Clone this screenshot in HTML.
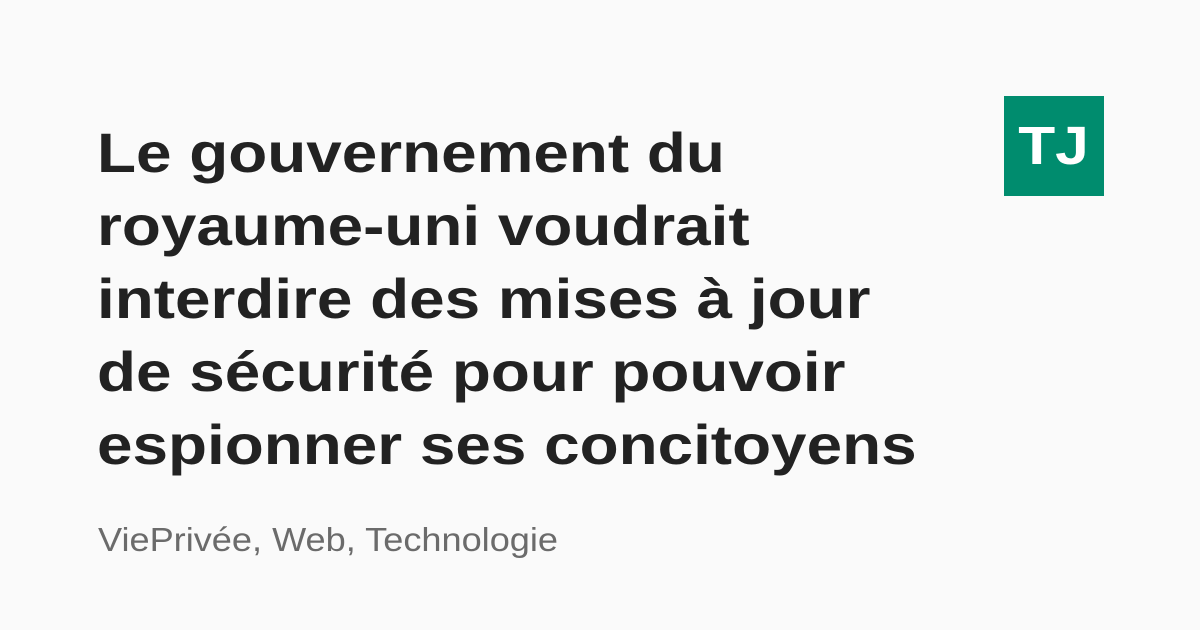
<!DOCTYPE html>
<html><head><meta charset="utf-8"><style>
html,body{margin:0;padding:0}
body{width:1200px;height:630px;background:#fafafa;position:relative;overflow:hidden;font-family:"Liberation Sans",sans-serif}
h1{position:absolute;left:97px;top:116px;margin:0;font-size:56px;line-height:73px;font-weight:bold;color:#222;transform:scaleX(1.14);transform-origin:0 0;white-space:nowrap}
.tags{position:absolute;left:98px;top:518px;font-size:33px;color:#6b6b6b;line-height:44px;transform:scaleX(1.095);transform-origin:0 0;white-space:nowrap}
.logo{position:absolute;left:1004px;top:96px;width:100px;height:100px;background:#008c6e;color:#fff;font-weight:bold;font-size:54px;line-height:100px;text-align:center}
.logo span{display:inline-block;transform:scaleX(1.12)}
</style></head><body>
<h1>Le gouvernement du<br>royaume-uni voudrait<br>interdire des mises à jour<br>de sécurité pour pouvoir<br>espionner ses concitoyens</h1>
<div class="tags">ViePrivée, Web, Technologie</div>
<div class="logo"><span>TJ</span></div>
</body></html>
